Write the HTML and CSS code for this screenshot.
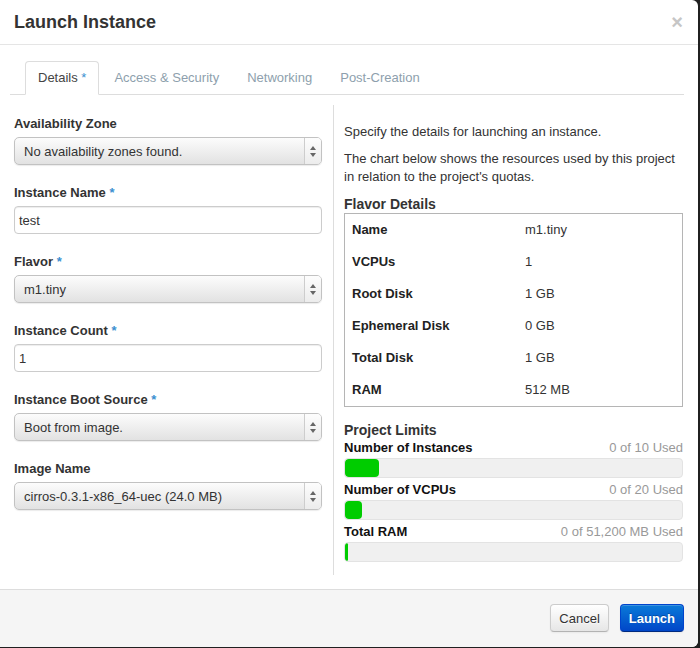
FILE: index.html
```html
<!DOCTYPE html>
<html>
<head>
<meta charset="utf-8">
<title>Launch Instance</title>
<link rel="stylesheet" href="styles.css">
</head>
<body>
<div class="modal">
  <div class="modal-header">
    <h3>Launch Instance</h3>
    <span class="close">×</span>
  </div>
  <div class="modal-body">
    <ul class="nav-tabs">
      <li class="active">Details <span class="req">*</span></li>
      <li>Access &amp; Security</li>
      <li>Networking</li>
      <li>Post-Creation</li>
    </ul>
    <div class="tab-content">
      <div class="left">
        <div class="group">
          <label>Availability Zone</label>
          <div class="select"><span class="val">No availability zones found.</span><span class="arrows"><i class="up"></i><i class="down"></i></span></div>
        </div>
        <div class="group">
          <label>Instance Name <span class="req">*</span></label>
          <div class="input">test</div>
        </div>
        <div class="group">
          <label>Flavor <span class="req">*</span></label>
          <div class="select"><span class="val">m1.tiny</span><span class="arrows"><i class="up"></i><i class="down"></i></span></div>
        </div>
        <div class="group">
          <label>Instance Count <span class="req">*</span></label>
          <div class="input">1</div>
        </div>
        <div class="group">
          <label>Instance Boot Source <span class="req">*</span></label>
          <div class="select"><span class="val">Boot from image.</span><span class="arrows"><i class="up"></i><i class="down"></i></span></div>
        </div>
        <div class="group">
          <label>Image Name</label>
          <div class="select"><span class="val">cirros-0.3.1-x86_64-uec (24.0 MB)</span><span class="arrows"><i class="up"></i><i class="down"></i></span></div>
        </div>
      </div>
      <div class="right">
        <p>Specify the details for launching an instance.</p>
        <p>The chart below shows the resources used by this project<br>in relation to the project's quotas.</p>
        <h4>Flavor Details</h4>
        <div class="flavor">
          <div class="k">Name</div><div class="v">m1.tiny</div>
          <div class="k">VCPUs</div><div class="v">1</div>
          <div class="k">Root Disk</div><div class="v">1 GB</div>
          <div class="k">Ephemeral Disk</div><div class="v">0 GB</div>
          <div class="k">Total Disk</div><div class="v">1 GB</div>
          <div class="k">RAM</div><div class="v">512 MB</div>
        </div>
        <h4 class="limits-title">Project Limits</h4>
        <div class="limit">
          <div class="limit-head"><strong>Number of Instances</strong><span>0 of 10 Used</span></div>
          <div class="bar"><div class="fill" style="width:10%"></div></div>
        </div>
        <div class="limit">
          <div class="limit-head"><strong>Number of VCPUs</strong><span>0 of 20 Used</span></div>
          <div class="bar"><div class="fill" style="width:5%"></div></div>
        </div>
        <div class="limit">
          <div class="limit-head"><strong>Total RAM</strong><span>0 of 51,200 MB Used</span></div>
          <div class="bar"><div class="fill" style="width:1%"></div></div>
        </div>
      </div>
    </div>
  </div>
  <div class="modal-footer">
    <button class="btn">Cancel</button>
    <button class="btn btn-primary">Launch</button>
  </div>
</div>
</body>
</html>
```

FILE: styles.css
```css
* { box-sizing: border-box; }
html, body { margin: 0; padding: 0; }
body {
  background: #202020;
  width: 700px;
  height: 648px;
  font-family: "Liberation Sans", Arial, Helvetica, sans-serif;
  font-size: 13px;
  color: #333;
}
.modal {
  width: 698px;
  height: 647px;
  background: #fff;
  border-radius: 0 6px 6px 0;
  display: flex;
  flex-direction: column;
  overflow: hidden;
}
.modal-header {
  height: 45px;
  flex: none;
  border-bottom: 1px solid #e5e5e5;
  display: flex;
  align-items: center;
  justify-content: space-between;
  padding: 0 15px 0 14px;
}
.modal-header h3 {
  margin: 0;
  font-size: 18px;
  font-weight: bold;
  line-height: 20px;
  color: #333;
}
.close {
  font-size: 20px;
  font-weight: bold;
  line-height: 20px;
  color: #c6c6c6;
}
.modal-body {
  flex: 1;
  padding: 16px 14px 0 10px;
}
.nav-tabs {
  list-style: none;
  margin: 0;
  padding: 0 0 0 15px;
  display: flex;
  height: 34px;
  border-bottom: 1px solid #ddd;
}
.nav-tabs li {
  height: 34px;
  padding: 0 12px;
  margin-right: 2px;
  line-height: 32px;
  color: #8e9fad;
  border: 1px solid transparent;
  border-radius: 4px 4px 0 0;
}
.nav-tabs li.active {
  color: #444;
  background: #fff;
  border-color: #ddd #ddd transparent;
}
.req { color: #3b8fd0; }
.tab-content {
  display: flex;
  margin-left: 4px;
}
.left {
  width: 308px;
  padding-top: 20px;
}
.group { margin-bottom: 19px; }
.group label {
  display: block;
  font-weight: bold;
  line-height: 18px;
  margin-bottom: 4px;
  color: #333;
}
.select {
  height: 28px;
  border: 1px solid #c2c2c2;
  border-radius: 5px;
  background: linear-gradient(#fcfcfc, #e2e2e2);
  box-shadow: 0 1px 1px rgba(0, 0, 0, 0.08);
  display: flex;
  align-items: center;
  padding-left: 9px;
  color: #333;
}
.select .val { flex: 1; white-space: nowrap; }
.arrows {
  width: 17px;
  align-self: stretch;
  border-left: 1px solid #cdcdcd;
  background: linear-gradient(#fdfdfd, #ececec);
  border-radius: 0 4px 4px 0;
  display: flex;
  flex-direction: column;
  align-items: center;
  justify-content: center;
  gap: 3px;
}
.arrows .up {
  width: 0; height: 0;
  border-left: 3px solid transparent;
  border-right: 3px solid transparent;
  border-bottom: 4px solid #666;
}
.arrows .down {
  width: 0; height: 0;
  border-left: 3px solid transparent;
  border-right: 3px solid transparent;
  border-top: 4px solid #666;
}
.input {
  height: 28px;
  border: 1px solid #ccc;
  border-radius: 4px;
  box-shadow: inset 0 1px 1px rgba(0, 0, 0, 0.075);
  display: flex;
  align-items: center;
  padding-left: 4px;
  color: #333;
}
.right {
  width: 350px;
  margin-left: 11px;
  margin-top: 10px;
  border-left: 1px solid #ddd;
  padding: 18px 0 10px 10px;
  align-self: flex-start;
}
.right p {
  margin: 0 0 9px;
  line-height: 18px;
}
.right h4 {
  margin: 2px 0 0;
  font-size: 14px;
  line-height: 18px;
  font-weight: bold;
  color: #333;
}
.flavor {
  display: grid;
  grid-template-columns: 180px 1fr;
  grid-auto-rows: 32px;
  border: 1px solid #b5b5b5;
}
.flavor .k {
  padding-left: 7px;
  font-weight: bold;
  color: #222;
  line-height: 32px;
}
.flavor .v {
  line-height: 32px;
  color: #333;
}
.right h4.limits-title { margin-top: 14px; }
.limit-head {
  display: flex;
  justify-content: space-between;
  line-height: 18px;
}
.limit-head strong { color: #111; }
.limit-head span { color: #999; }
.bar {
  height: 20px;
  margin: 1px 0 3px;
  background: #f0f0f0;
  border: 1px solid #e3e3e3;
  border-radius: 4px;
  overflow: hidden;
}
.fill {
  height: 100%;
  min-width: 3px;
  background: #00cc00;
  border-radius: 4px;
}
.modal-footer {
  flex: none;
  height: 58px;
  border-top: 1px solid #ddd;
  background: #f5f5f5;
  display: flex;
  justify-content: flex-end;
  align-items: flex-start;
  gap: 11px;
  padding: 14px 14px 0;
}
.btn {
  height: 28px;
  padding: 0 8px;
  font-family: inherit;
  font-size: 13px;
  border-radius: 4px;
  border: 1px solid #ccc;
  border-bottom-color: #b3b3b3;
  background: linear-gradient(#ffffff, #e6e6e6);
  color: #333;
  text-shadow: 0 1px 1px rgba(255, 255, 255, 0.75);
  box-shadow: inset 0 1px 0 rgba(255, 255, 255, 0.2), 0 1px 2px rgba(0, 0, 0, 0.05);
}
.btn-primary {
  padding: 0 8px;
  font-weight: bold;
  color: #fff;
  background: linear-gradient(#0a7ad8, #0046c8);
  border-color: #0044cc #0044cc #002a80;
  text-shadow: 0 -1px 0 rgba(0, 0, 0, 0.25);
}
```
